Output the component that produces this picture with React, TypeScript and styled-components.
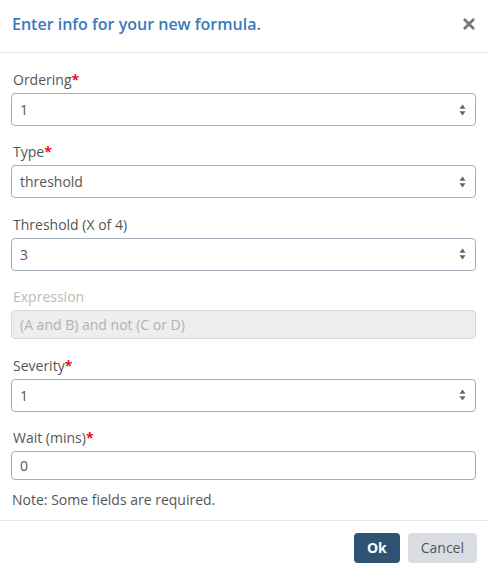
import styled, { createGlobalStyle } from 'styled-components'

const GlobalStyle = createGlobalStyle`
  * { box-sizing: border-box; }
  body {
    margin: 0;
    background: #fff;
    font-family: "Open Sans", "Liberation Sans", sans-serif;
    color: #555;
  }
`

const Modal = styled.div`
  width: 488px;
  background: #fff;
`

const Header = styled.div`
  display: flex;
  align-items: center;
  justify-content: space-between;
  padding: 14px 12px 18px 12px;
  border-bottom: 1px solid #e5e5e5;
`

const Title = styled.h4`
  margin: 0;
  font-size: 16px;
  line-height: 20px;
  font-weight: 600;
  color: #3a7abd;
`

const Close = styled.button`
  border: none;
  background: none;
  padding: 0;
  margin-right: 1px;
  display: flex;
  cursor: pointer;
`

const Body = styled.div`
  padding: 17px 12px 10px 11px;
`

const Group = styled.div`
  margin-bottom: 16.4px;
`

const Label = styled.label<{ $disabled?: boolean }>`
  display: block;
  font-size: 14px;
  line-height: 20px;
  margin: 0 0 3px 2px;
  color: ${p => (p.$disabled ? '#bbb' : '#555')};
`

const Req = styled.span`
  color: #e8101a;
  font-weight: 700;
`

const Field = styled.div<{ $tall?: boolean; $disabled?: boolean }>`
  display: flex;
  align-items: center;
  justify-content: space-between;
  height: ${p => (p.$tall ? '33px' : '29px')};
  padding: 0 9px 0 8px;
  border: 1px solid ${p => (p.$disabled ? '#d7d7d7' : '#a2afbd')};
  border-radius: 4px;
  background: ${p => (p.$disabled ? '#eee' : '#fff')};
  font-size: 14px;
  color: ${p => (p.$disabled ? '#b0b0b0' : '#555')};
`

const Note = styled.div`
  margin-top: 10px;
  font-size: 14px;
  line-height: 20px;
  padding-left: 1px;
`

const Footer = styled.div`
  display: flex;
  justify-content: flex-end;
  gap: 8px;
  padding: 12px 11px 13px;
  border-top: 1px solid #e5e5e5;
`

const Button = styled.button<{ $primary?: boolean }>`
  height: 30px;
  padding: 0 13px;
  border: none;
  border-radius: 4px;
  font-family: "Open Sans", "Liberation Sans", sans-serif;
  font-size: 14px;
  font-weight: ${p => (p.$primary ? 700 : 400)};
  background: ${p => (p.$primary ? '#2e5273' : '#d9dde1')};
  color: ${p => (p.$primary ? '#fff' : '#555')};
  cursor: pointer;
`

const Arrows = () => (
  <svg width="7" height="12" viewBox="0 0 7 12">
    <path d="M3.5 0.5 L6.5 4.8 L0.5 4.8 Z" fill="#666" />
    <path d="M3.5 11.5 L6.5 7.2 L0.5 7.2 Z" fill="#666" />
  </svg>
)

const Select = ({ value }: { value: string }) => (
  <Field $tall>
    <span>{value}</span>
    <Arrows />
  </Field>
)

export default function App() {
  return (
    <>
      <GlobalStyle />
      <Modal>
        <Header>
          <Title>Enter info for your new formula.</Title>
          <Close>
            <svg width="12" height="12" viewBox="0 0 12 12">
              <path d="M1.8 1.8 L10.2 10.2 M10.2 1.8 L1.8 10.2" stroke="#777" strokeWidth="2.8" strokeLinecap="round" />
            </svg>
          </Close>
        </Header>
        <Body>
          <Group>
            <Label>Ordering<Req>*</Req></Label>
            <Select value="1" />
          </Group>
          <Group>
            <Label>Type<Req>*</Req></Label>
            <Select value="threshold" />
          </Group>
          <Group>
            <Label>Threshold (X of 4)</Label>
            <Select value="3" />
          </Group>
          <Group>
            <Label $disabled>Expression</Label>
            <Field $disabled>(A and B) and not (C or D)</Field>
          </Group>
          <Group>
            <Label>Severity<Req>*</Req></Label>
            <Select value="1" />
          </Group>
          <div>
            <Label>Wait (mins)<Req>*</Req></Label>
            <Field>0</Field>
          </div>
          <Note>Note: Some fields are required.</Note>
        </Body>
        <Footer>
          <Button $primary>Ok</Button>
          <Button>Cancel</Button>
        </Footer>
      </Modal>
    </>
  )
}
